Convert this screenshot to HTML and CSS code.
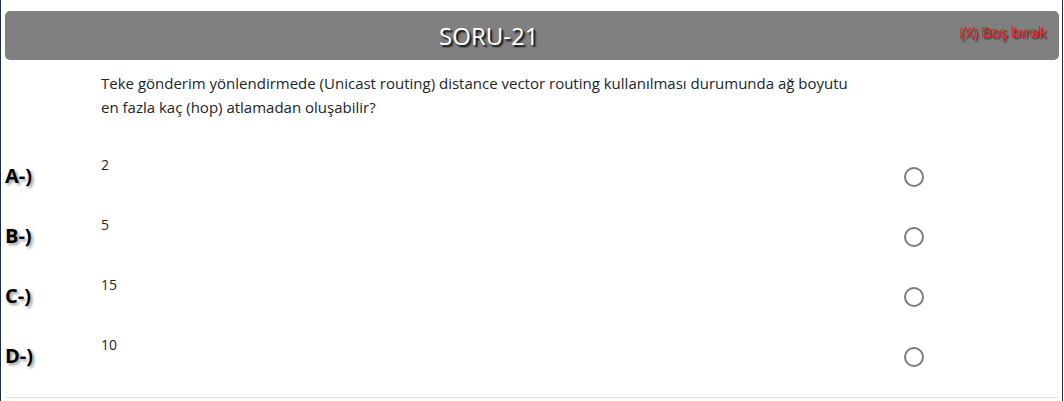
FILE: index.html
```html
<!DOCTYPE html>
<html lang="tr">
<head>
<meta charset="utf-8">
<title>SORU-21</title>
<link rel="stylesheet" href="styles.css">
</head>
<body>
<div class="frame">
  <div class="page">
    <div class="header">
      <div class="title">SORU-21</div>
      <div class="skip">(X) Boş bırak</div>
    </div>
    <div class="question">Teke gönderim yönlendirmede (Unicast routing) distance vector routing kullanılması durumunda ağ boyutu<br>en fazla kaç (hop) atlamadan oluşabilir?</div>
    <div class="options">
      <div class="option">
        <div class="label">A-)</div>
        <div class="value">2</div>
        <div class="choice"><span class="radio"></span></div>
      </div>
      <div class="option">
        <div class="label">B-)</div>
        <div class="value">5</div>
        <div class="choice"><span class="radio"></span></div>
      </div>
      <div class="option">
        <div class="label">C-)</div>
        <div class="value">15</div>
        <div class="choice"><span class="radio"></span></div>
      </div>
      <div class="option">
        <div class="label">D-)</div>
        <div class="value">10</div>
        <div class="choice"><span class="radio"></span></div>
      </div>
    </div>
    <div class="rule"></div>
  </div>
</div>
</body>
</html>
```
FILE: styles.css
```css
* { box-sizing: border-box; }
html, body { margin: 0; padding: 0; background: #fff; }
body {
  font-family: "Open Sans", "Noto Sans", "Liberation Sans", sans-serif;
  color: #212529;
}
.frame {
  width: 1063px;
  height: 401px;
  border-left: 1px solid #1d2b4c;
  border-right: 1px solid #1d2b4c;
  overflow: hidden;
}
.page {
  padding: 11px 3px 0 4px;
}
.header {
  height: 49px;
  background: #808080;
  border-radius: 5px;
  display: flex;
  align-items: flex-start;
}
.title {
  width: 965px;
  padding-left: 13px;
  text-align: center;
  color: #fff;
  font-size: 24px;
  line-height: 50px;
  text-shadow: 2px 2px 2px #000;
}
.skip {
  flex: 1;
  text-align: right;
  padding: 11px 13px 0 0;
  color: #ff1a1a;
  font-size: 15px;
  line-height: 18px;
  white-space: nowrap;
  text-shadow: 2px 2px 2px #222;
}
.question {
  padding: 11px 0 0 96px;
  font-size: 15px;
  line-height: 24px;
  height: 86px;
}
.option {
  display: flex;
  height: 60px;
}
.label {
  width: 96px;
  padding-top: 18px;
  font-size: 20px;
  font-weight: 700;
  color: #000;
  text-shadow: 2px 2px 3px #999;
  line-height: 24px;
}
.value {
  width: 803px;
  font-size: 14px;
  line-height: 20px;
  padding-top: 9px;
}
.choice {
  padding-top: 21px;
}
.radio {
  display: block;
  width: 20px;
  height: 20px;
  border: 2px solid #7a7a7a;
  border-radius: 50%;
  background: #fff;
}
.rule {
  margin-top: 11px;
  height: 1px;
  background: #e3e3e3;
}
```
